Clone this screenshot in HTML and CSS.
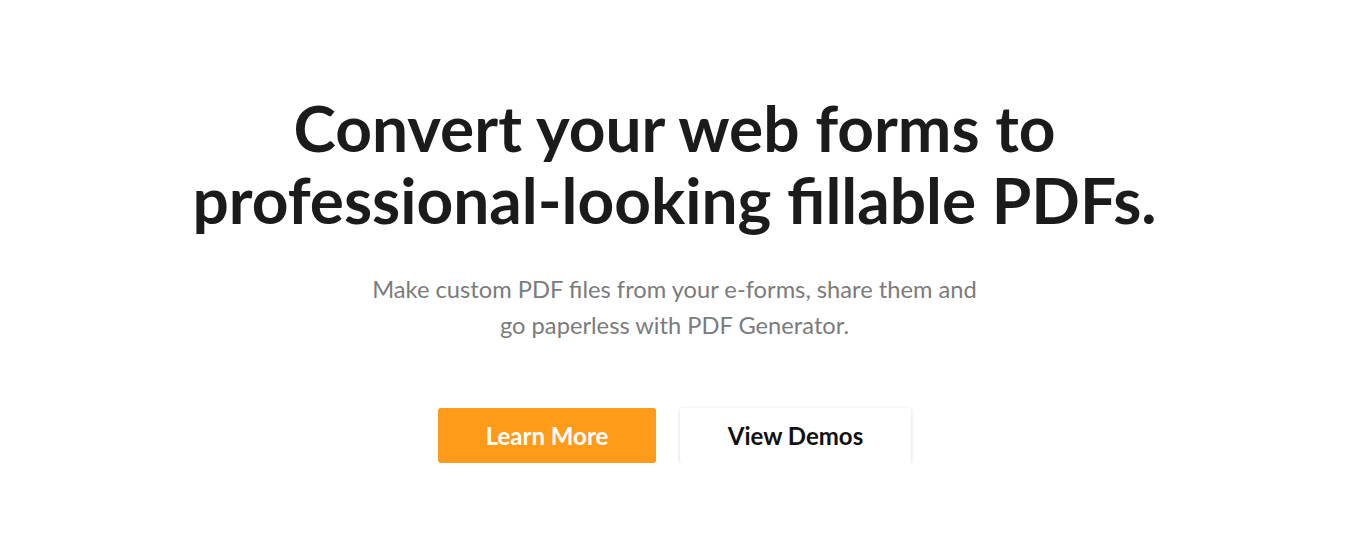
FILE: index.html
```html
<!DOCTYPE html>
<html lang="en">
<head>
<meta charset="utf-8">
<title>PDF Generator</title>
<link rel="stylesheet" href="styles.css">
</head>
<body>
<section class="hero">
  <h1 class="hero-title">Convert your web forms to<br>professional-looking fillable PDFs.</h1>
  <p class="hero-sub">Make custom PDF files from your e-forms, share them and<br>go paperless with PDF Generator.</p>
  <div class="hero-actions">
    <a class="btn btn-primary" href="#">Learn More</a>
    <a class="btn btn-secondary" href="#">View Demos</a>
  </div>
</section>
</body>
</html>
```
FILE: styles.css
```css
html, body {
  margin: 0;
  padding: 0;
  background: #fff;
}
body {
  font-family: Lato, "Open Sans", Arial, sans-serif;
  color: #1a1a1a;
}
.hero {
  display: flex;
  flex-direction: column;
  align-items: center;
  text-align: center;
  padding-top: 92px;
}
.hero-title {
  margin: 0;
  font-size: 64px;
  font-weight: 700;
  line-height: 72px;
  color: #1b1b1b;
}
.hero-sub {
  margin: 35px 0 0;
  font-size: 23.7px;
  line-height: 36px;
  color: #7b7b7b;
}
.hero-actions {
  display: flex;
  gap: 24px;
  margin-top: 65px;
}
.btn {
  display: flex;
  align-items: center;
  justify-content: center;
  height: 55px;
  padding-bottom: 1px;
  box-sizing: border-box;
  border-radius: 3px;
  font-size: 24px;
  font-weight: 700;
  text-decoration: none;
}
.btn-primary {
  width: 218px;
  background: #ff9b19;
  color: #fff;
}
.btn-secondary {
  width: 231px;
  background: #fff;
  color: #111;
  box-shadow: 0 1px 4px rgba(0,0,0,0.14);
}
```
